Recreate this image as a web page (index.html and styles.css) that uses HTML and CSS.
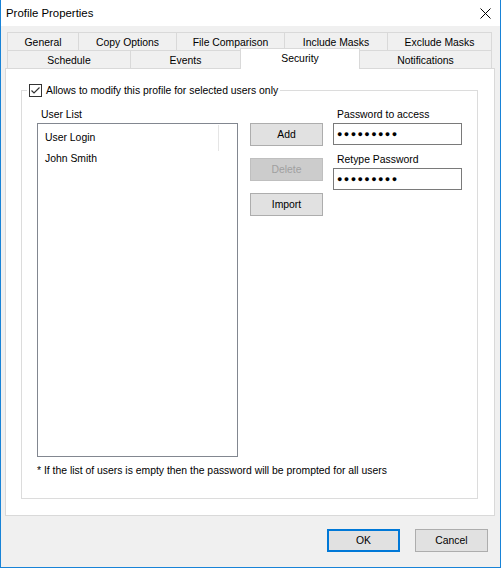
FILE: index.html
```html
<!DOCTYPE html>
<html lang="en">
<head>
    <meta charset="UTF-8">
    <title>Profile Properties</title>
    <link rel="stylesheet" href="styles.css">
</head>
<body>
    <div class="window">
        <div class="titlebar">
            <span class="title">Profile Properties</span>
            <svg class="close" width="11" height="11" viewBox="0 0 11 11">
                <path d="M0.5 0.5L10.5 10.5M10.5 0.5L0.5 10.5" stroke="#000" stroke-width="1"/>
            </svg>
        </div>
        <div class="client">
            <div class="tabs">
                <div class="tabrow">
                    <div class="tab first t-general">General</div>
                    <div class="tab t-copy">Copy Options</div>
                    <div class="tab t-compare">File Comparison</div>
                    <div class="tab t-include">Include Masks</div>
                    <div class="tab t-exclude">Exclude Masks</div>
                </div>
                <div class="tabrow second">
                    <div class="tab first t-schedule">Schedule</div>
                    <div class="tab t-events">Events</div>
                    <div class="tab selected t-security">Security</div>
                    <div class="tab t-notify">Notifications</div>
                </div>
            </div>
            <div class="panel">
                <fieldset class="group">
                    <legend class="group-title">
                        <span class="checkbox">
                            <svg width="13" height="13" viewBox="0 0 13 13">
                                <rect x="0.5" y="0.5" width="12" height="12" fill="#fff" stroke="#333"/>
                                <path d="M2.5 6.5L5 9L10.5 3.5" fill="none" stroke="#333" stroke-width="1.2"/>
                            </svg>
                        </span>
                        Allows to modify this profile for selected users only
                    </legend>
                    <div class="group-body">
                        <div class="users">
                            <div class="label">User List</div>
                            <div class="listbox">
                                <div class="row head"><span class="cell">User Login</span></div>
                                <div class="row"><span class="cell">John Smith</span></div>
                            </div>
                        </div>
                        <div class="actions">
                            <button class="btn">Add</button>
                            <button class="btn" disabled>Delete</button>
                            <button class="btn">Import</button>
                        </div>
                        <div class="passwords">
                            <div class="label">Password to access</div>
                            <div class="field"><span class="dots">●●●●●●●●●</span></div>
                            <div class="label retype">Retype Password</div>
                            <div class="field"><span class="dots">●●●●●●●●●</span></div>
                        </div>
                    </div>
                    <p class="note">* If the list of users is empty then the password will be prompted for all users</p>
                </fieldset>
            </div>
            <div class="footer">
                <button class="btn default">OK</button>
                <button class="btn">Cancel</button>
            </div>
        </div>
    </div>
</body>
</html>
```
FILE: styles.css
```css
body {
    margin: 0;
    font-family: 'Liberation Sans', Arial, sans-serif;
    font-size: 10.4px;
    color: #000;
}
.window {
    width: 501px;
    height: 568px;
    box-sizing: border-box;
    border: 1px solid #1883d7;
    border-top: none;
    background: #f0f0f0;
}
.titlebar {
    height: 26px;
    background: #fff;
    display: flex;
    align-items: center;
    justify-content: space-between;
    padding: 0 9px 0 5px;
}
.title {
    font-size: 11.4px;
}
.client {
    padding-top: 6px;
}
.tabs {
    margin: 0 8px 0 6px;
}
.tabrow {
    display: flex;
}
.tab {
    box-sizing: border-box;
    height: 18px;
    line-height: 19px;
    text-align: center;
    border-top: 1px solid #d9d9d9;
    border-right: 1px solid #d9d9d9;
    background: #f0f0f0;
}
.tab.first {
    border-left: 1px solid #d9d9d9;
}
.t-general { width: 72px; }
.t-copy { width: 98px; }
.t-compare { width: 108px; }
.t-include { width: 103px; }
.t-exclude { width: 104px; }
.t-schedule { width: 124px; }
.t-events { width: 110px; }
.t-notify { width: 132px; }
.t-security {
    width: 120px;
    margin-left: -1px;
}
.tab.selected {
    position: relative;
    z-index: 1;
    height: 21px;
    margin-top: -2px;
    margin-bottom: -1px;
    line-height: 19px;
    background: #fff;
    border-left: 1px solid #d9d9d9;
}
.panel {
    box-sizing: border-box;
    height: 448px;
    margin: 0 5px 0 4px;
    background: #fff;
    border: 1px solid #d9d9d9;
    padding: 14px 16px 0 15px;
}
.group {
    margin: 0;
    padding: 0 0 0 15px;
    border: 1px solid #dcdcdc;
    min-width: 0;
}
.group-title {
    margin-left: -10px;
    padding: 0 2px;
    height: 15px;
    line-height: 15px;
    display: flex;
    align-items: center;
}
.checkbox {
    display: flex;
    width: 13px;
    height: 13px;
    margin-right: 4px;
}
.group-body {
    display: flex;
    padding-top: 8px;
}
.label {
    height: 16px;
    line-height: 18px;
    padding-left: 4px;
}
.listbox {
    box-sizing: border-box;
    width: 201px;
    height: 334px;
    margin-top: 1px;
    border: 1px solid #828790;
    padding-top: 1px;
}
.row {
    height: 20px;
    line-height: 20px;
}
.row.head {
    height: 24px;
    line-height: 26px;
}
.cell {
    display: block;
    box-sizing: border-box;
    width: 181px;
    padding-left: 7px;
}
.row.head .cell {
    border-right: 1px solid #e5e5e5;
}
.actions {
    display: flex;
    flex-direction: column;
    gap: 12px;
    margin: 17px 0 0 12px;
}
.btn {
    box-sizing: border-box;
    width: 73px;
    height: 23px;
    padding: 0;
    font-family: inherit;
    font-size: 10.4px;
    color: #000;
    background: #e1e1e1;
    border: 1px solid #adadad;
}
.btn:disabled {
    background: #cccccc;
    border-color: #bfbfbf;
    color: #a0a0a0;
}
.passwords {
    margin-left: 10px;
    width: 129px;
}
.field {
    box-sizing: border-box;
    height: 22px;
    margin-top: 1px;
    border: 1px solid #7a7a7a;
    background: #fff;
    padding-left: 3px;
    display: flex;
    align-items: center;
}
.dots {
    font-size: 9px;
    letter-spacing: 1.4px;
}
.label.retype {
    margin-top: 6px;
}
.note {
    margin: 5px 0 0;
    height: 16px;
    line-height: 18px;
    padding-bottom: 20px;
}
.footer {
    display: flex;
    justify-content: flex-end;
    gap: 15px;
    padding: 13px 12px 0 0;
}
.btn.default {
    border: 2px solid #0078d7;
}
```
